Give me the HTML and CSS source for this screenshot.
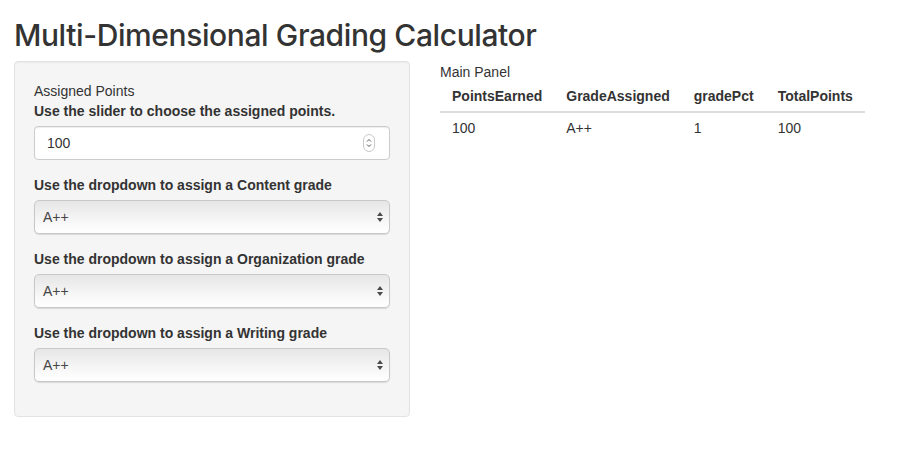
FILE: index.html
```html
<!DOCTYPE html>
<html>
<head>
<meta charset="utf-8">
<title>Multi-Dimensional Grading Calculator</title>
<link rel="stylesheet" href="styles.css">
</head>
<body>
<div class="container">
  <h2 class="title">Multi-Dimensional Grading Calculator</h2>
  <div class="row">
    <div class="well">
      <div class="plain">Assigned Points</div>
      <div class="form-group">
        <label class="label">Use the slider to choose the assigned points.</label>
        <div class="input">
          <span class="value">100</span>
          <svg class="spinner" width="12" height="18" viewBox="0 0 12 18">
            <rect x="0.5" y="0.5" width="11" height="17" rx="5.5" fill="#fff" stroke="#c9c9c9"/>
            <path d="M4 7.5 L6 5.5 L8 7.5" fill="none" stroke="#555" stroke-width="1"/>
            <path d="M4 10.5 L6 12.5 L8 10.5" fill="none" stroke="#555" stroke-width="1"/>
          </svg>
        </div>
      </div>
      <div class="form-group">
        <label class="label">Use the dropdown to assign a Content grade</label>
        <div class="select">
          <span class="value">A++</span>
          <svg class="arrows" width="8" height="12" viewBox="0 0 8 12"><path d="M4 1 L7 5 L1 5 Z M4 11 L7 7 L1 7 Z" fill="#4a4a4a"/></svg>
        </div>
      </div>
      <div class="form-group">
        <label class="label">Use the dropdown to assign a Organization grade</label>
        <div class="select">
          <span class="value">A++</span>
          <svg class="arrows" width="8" height="12" viewBox="0 0 8 12"><path d="M4 1 L7 5 L1 5 Z M4 11 L7 7 L1 7 Z" fill="#4a4a4a"/></svg>
        </div>
      </div>
      <div class="form-group">
        <label class="label">Use the dropdown to assign a Writing grade</label>
        <div class="select">
          <span class="value">A++</span>
          <svg class="arrows" width="8" height="12" viewBox="0 0 8 12"><path d="M4 1 L7 5 L1 5 Z M4 11 L7 7 L1 7 Z" fill="#4a4a4a"/></svg>
        </div>
      </div>
    </div>
    <div class="main">
      <div class="plain">Main Panel</div>
      <table class="table">
        <thead>
          <tr><th>PointsEarned</th><th>GradeAssigned</th><th>gradePct</th><th>TotalPoints</th></tr>
        </thead>
        <tbody>
          <tr><td>100</td><td>A++</td><td>1</td><td>100</td></tr>
        </tbody>
      </table>
    </div>
  </div>
</div>
</body>
</html>
```
FILE: styles.css
```css
html, body {
  margin: 0;
  padding: 0;
  background: #fff;
}
body {
  font-family: "Liberation Sans", Arial, sans-serif;
  font-size: 14px;
  line-height: 20px;
  color: #333;
}
.container {
  padding: 0 14px;
}
.title {
  font-family: Inter, "Liberation Sans", sans-serif;
  font-size: 30px;
  font-weight: 500;
  line-height: 33px;
  margin: 19px 0 9px;
  color: #333;
  letter-spacing: -0.4px;
}
.row {
  display: flex;
  align-items: flex-start;
  gap: 30px;
}
.well {
  width: 356px;
  padding: 19px;
  background: #f5f5f5;
  border: 1px solid #e3e3e3;
  border-radius: 4px;
  box-shadow: inset 0 1px 1px rgba(0,0,0,0.05);
}
.plain {
  height: 20px;
}
.form-group {
  margin-bottom: 15px;
}
.label {
  display: block;
  font-weight: bold;
  margin-bottom: 5px;
}
.input {
  height: 32px;
  background: #fff;
  border: 1px solid #ccc;
  border-radius: 4px;
  display: flex;
  align-items: center;
  justify-content: space-between;
  padding: 0 14px 0 12px;
  box-shadow: inset 0 1px 1px rgba(0,0,0,0.075);
}
.spinner {
  display: block;
}
.select {
  height: 32px;
  border: 1px solid #c8c8c8;
  border-radius: 5px;
  background: linear-gradient(#e6e6e6 0%, #f2f2f2 45%, #fbfbfb 80%, #fff 100%);
  box-shadow: 0 1px 1px rgba(0,0,0,0.12);
  display: flex;
  align-items: center;
  justify-content: space-between;
  padding: 0 5px 0 8px;
  color: #444;
}
.arrows {
  display: block;
}
.main {
  width: 424px;
  margin-top: 1px;
}
.table {
  border-collapse: collapse;
  border-spacing: 0;
}
.table th {
  text-align: left;
  font-weight: bold;
  padding: 4px 12px 5px;
  border-bottom: 2px solid #ddd;
}
.table td {
  padding: 5px 12px;
}
```
